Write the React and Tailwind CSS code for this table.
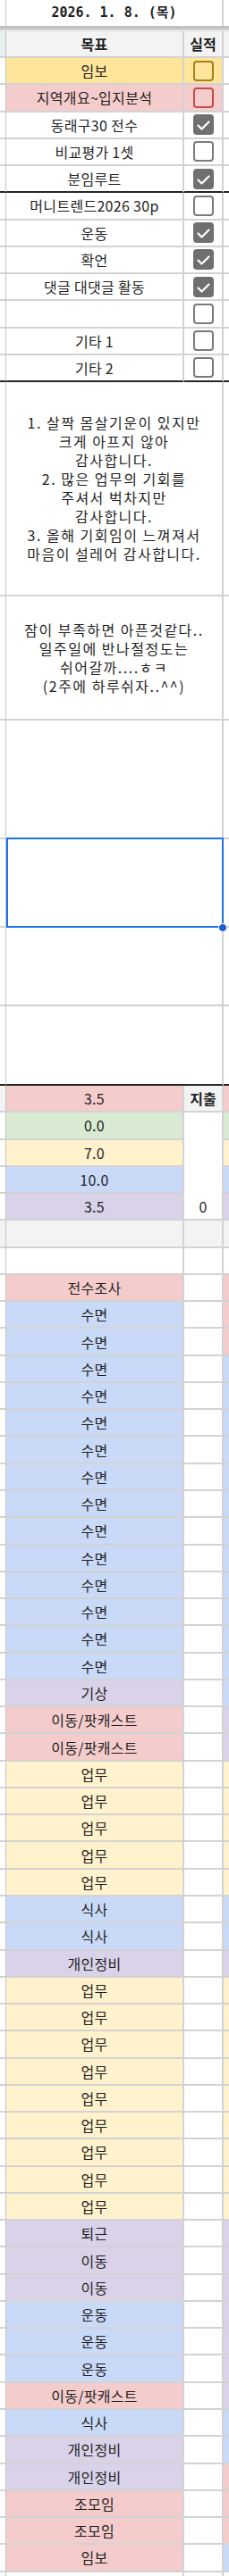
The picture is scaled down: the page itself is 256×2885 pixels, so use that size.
import React from "react";

const P = "bg-[#f4cccc]";
const B = "bg-[#c9daf8]";
const V = "bg-[#d9d2e9]";
const Y = "bg-[#fff2cc]";
const G = "bg-[#d9ead3]";
const W = "bg-white";
const GR = "bg-[#f3f3f3]";

const GRID = "border-b-2 border-b-[#d3d3d3]";
const BLACK = "border-b-2 border-b-[#262626]";
const NONE = "";

const goals = [
  { label: "임보", bg: "bg-[#ffe599]", box: "gold" },
  { label: "지역개요~입지분석", bg: P, box: "red" },
  { label: "동래구30 전수", bg: W, box: "on" },
  { label: "비교평가 1셋", bg: W, box: "off" },
  { label: "분임루트", bg: W, box: "on", line: BLACK },
  { label: "머니트렌드2026 30p", bg: W, box: "off" },
  { label: "운동", bg: W, box: "on" },
  { label: "확언", bg: W, box: "on" },
  { label: "댓글 대댓글 활동", bg: W, box: "on" },
  { label: "", bg: W, box: "off" },
  { label: "기타 1", bg: W, box: "off" },
  { label: "기타 2", bg: W, box: "off", line: BLACK },
];

const thanks = [
  "1. 살짝 몸살기운이 있지만",
  "크게 아프지 않아",
  "감사합니다.",
  "2. 많은 업무의 기회를",
  "주셔서 벅차지만",
  "감사합니다.",
  "3. 올해 기회임이 느껴져서",
  "마음이 설레어 감사합니다.",
];

const memo = [
  "잠이 부족하면 아픈것같다..",
  "일주일에 반나절정도는",
  "쉬어갈까....ㅎㅋ",
  "(2주에 하루쉬자..^^)",
];

// [label, color, count]
const plan = [
  ["전수조사", P, 1],
  ["수면", B, 14],
  ["기상", V, 1],
  ["이동/팟캐스트", P, 2],
  ["업무", Y, 5],
  ["식사", B, 2],
  ["개인정비", V, 1],
  ["업무", Y, 9],
  ["퇴근", V, 1],
  ["이동", V, 2],
  ["운동", B, 3],
  ["이동/팟캐스트", P, 1],
  ["식사", B, 1],
  ["개인정비", V, 2],
  ["조모임", P, 2],
  ["임보", P, 1],
];

// next day's column, only a sliver is visible
const nextDay = [
  [P, 3], [B, 13], [V, 2], [Y, 5], [B, 2], [V, 1], [Y, 9], [V, 7], [B, 2], [P, 3], [B, 1],
];

const expand = (list) => list.flatMap(([a, b, n]) => Array.from({ length: n ?? b }, () => (n ? [a, b] : a)));

function Box({ kind }) {
  if (kind === "on") {
    return (
      <div className="w-[23px] h-[23px] rounded-[4px] bg-[#6f6f6f] flex items-center justify-center">
        <svg width="23" height="23" viewBox="0 0 23 23" fill="none" stroke="white" strokeWidth="2.2" strokeLinecap="round" strokeLinejoin="round">
          <path d="M5.5 12.5l4 4L17.5 8.5" />
        </svg>
      </div>
    );
  }
  const border =
    kind === "gold" ? "border-[#a8801e]" : kind === "red" ? "border-[#c84b4b]" : "border-[#7b7b7b]";
  return <div className={`w-[23px] h-[23px] rounded-[4px] border-[2.5px] ${border}`} />;
}

function Row({ h = "h-[30.25px]", left = W, right = W, line = GRID, leftLine, rightLine, children }) {
  return (
    <div className={`flex ${h}`}>
      <div className={`w-[7px] shrink-0 border-r border-r-[#c4c4c4] ${leftLine ?? line} ${left}`} />
      {children}
      <div className={`flex-1 ${rightLine ?? line} ${right}`} />
    </div>
  );
}

function Main({ bg = W, line = GRID, bold, children }) {
  return (
    <div
      className={`w-[199px] shrink-0 border-r-2 border-r-[#d3d3d3] ${line} ${bg} flex items-center justify-center text-[16px] tracking-[0.3px] ${bold ? "font-bold" : ""}`}
    >
      {children}
    </div>
  );
}

function Side({ bg = W, line = GRID, bold, children }) {
  return (
    <div
      className={`w-[44px] shrink-0 border-r-2 border-r-[#d3d3d3] ${line} ${bg} flex items-center justify-center text-[16px] ${bold ? "font-bold" : ""}`}
    >
      {children}
    </div>
  );
}

function Wide({ h, line = GRID, children }) {
  return (
    <Row h={h} line={line}>
      <div
        className={`w-[243px] shrink-0 border-r-2 border-r-[#d3d3d3] ${line} flex items-center justify-center text-center text-[16px] leading-[21px] tracking-[1.5px]`}
      >
        {children}
      </div>
    </Row>
  );
}

export default function App() {
  const rows = expand(plan);
  const next = expand(nextDay);

  return (
    <div className="w-[256px] bg-white text-[#1f1f1f] font-['Noto_Sans_CJK_KR',sans-serif]">
      {/* 날짜 */}
      <Row h="h-[29px]" line={NONE}>
        <div className="w-[243px] shrink-0 border-r-2 border-r-[#d3d3d3] flex items-center justify-center font-['DejaVu_Sans_Mono','Noto_Sans_CJK_KR',monospace] font-bold text-[15px]">
          2026. 1. 8. (목)
        </div>
      </Row>
      <div className="h-[4px] bg-[#c3c3c3]" />
      <div className="h-[2px] bg-[#e2e2e2]" />

      {/* 목표 / 실적 */}
      <Row h="h-[30px]" left="bg-[#e3f2ef]" right={GR}>
        <Main bg={GR} bold>목표</Main>
        <Side bg={GR} bold>실적</Side>
      </Row>
      {goals.map((g, i) => (
        <Row key={i} line={g.line ?? GRID}>
          <Main bg={g.bg} line={g.line ?? GRID}>{g.label}</Main>
          <Side bg={g.bg} line={g.line ?? GRID}>
            <Box kind={g.box} />
          </Side>
        </Row>
      ))}

      {/* 감사일기 / 메모 */}
      <Wide h="h-[240px]">
        <p>
          {thanks.map((t, i) => (
            <span key={i} className="block">{t}</span>
          ))}
        </p>
      </Wide>
      <Wide h="h-[139px]">
        <p>
          {memo.map((t, i) => (
            <span key={i} className="block">{t}</span>
          ))}
        </p>
      </Wide>
      <Wide h="h-[133px]" />
      <div className="relative">
        <Wide h="h-[99px]" />
        <div className="absolute left-[7px] w-[243px] -top-[2px] bottom-0 border-2 border-[#1a73e8] pointer-events-none z-10" />
        <div className="absolute left-[244px] -bottom-[5px] w-[10px] h-[10px] rounded-full bg-[#1a5fd0] border border-white z-10" />
      </div>
      <Wide h="h-[88px]" />
      <Wide h="h-[89px]" line={BLACK} />

      {/* 시간 합계 */}
      <Row h="h-[30.27px]" left={GR} right={P}>
        <Main bg={P}>3.5</Main>
        <Side bg={GR} bold>지출</Side>
      </Row>
      <Row h="h-[30.27px]" right={G}>
        <Main bg={G}>0.0</Main>
        <Side line={NONE} />
      </Row>
      <Row h="h-[30.27px]" right={Y}>
        <Main bg={Y}>7.0</Main>
        <Side line={NONE} />
      </Row>
      <Row h="h-[30.27px]" right={B}>
        <Main bg={B}>10.0</Main>
        <Side line={NONE} />
      </Row>
      <Row h="h-[30.27px]" right={V}>
        <Main bg={V}>3.5</Main>
        <Side>0</Side>
      </Row>
      <Row h="h-[30.27px]" left={GR} right={GR}>
        <Main bg={GR} />
        <Side bg={GR} />
      </Row>
      <Row h="h-[30.27px]">
        <Main />
        <Side />
      </Row>

      {/* 시간표 */}
      {rows.map(([label, bg], i) => (
        <Row key={i} h="h-[30.27px]" right={next[i]}>
          <Main bg={bg}>{label}</Main>
          <Side />
        </Row>
      ))}
      <Row h="h-[4px]" line={NONE}>
        <Main line={NONE} />
        <Side line={NONE} />
      </Row>
    </div>
  );
}
